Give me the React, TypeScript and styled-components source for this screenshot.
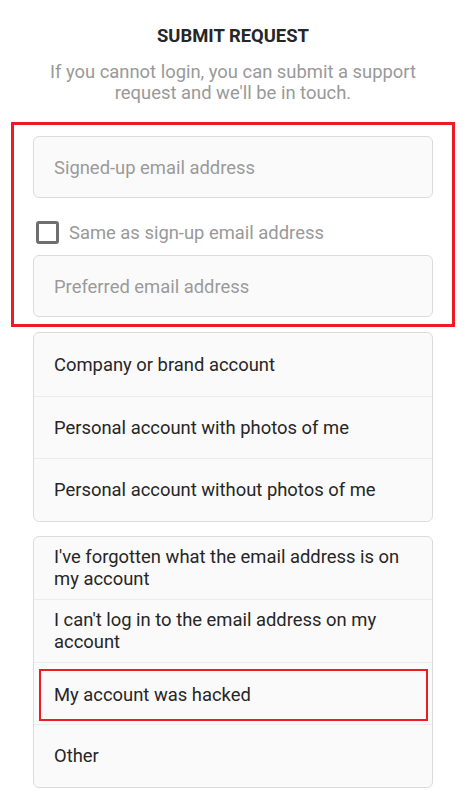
import styled, { createGlobalStyle } from "styled-components";

const GlobalStyle = createGlobalStyle`
    body {
        margin: 0;
        background: #ffffff;
        font-family: Roboto, "Liberation Sans", Arial, sans-serif;
    }
    * {
        box-sizing: border-box;
    }
`;

const accountTypes = [
    "Company or brand account",
    "Personal account with photos of me",
    "Personal account without photos of me",
];

const problems = [
    { label: "I've forgotten what the email address is on my account" },
    { label: "I can't log in to the email address on my account" },
    { label: "My account was hacked", marked: true },
    { label: "Other" },
];

const App = () => {
    return (
        <>
            <GlobalStyle />
            <Page>
                <Title>SUBMIT REQUEST</Title>
                <Intro>If you cannot login, you can submit a support request and we'll be in touch.</Intro>

                <Marked>
                    <Field placeholder="Signed-up email address" />
                    <CheckRow>
                        <CheckBox type="checkbox" />
                        Same as sign-up email address
                    </CheckRow>
                    <Field placeholder="Preferred email address" />
                </Marked>

                <Group>
                    {accountTypes.map((t) => (
                        <Option key={t}>{t}</Option>
                    ))}
                </Group>

                <Group>
                    {problems.map((p) => (
                        <Option key={p.label} $marked={p.marked}>
                            {p.marked ? <MarkedText>{p.label}</MarkedText> : p.label}
                        </Option>
                    ))}
                </Group>
            </Page>
        </>
    );
};

export default App;

const fontSize = "18.4px";

const Page = styled.div`
    display: flex;
    flex-direction: column;
    width: 444px;
    margin-left: 11px;
    padding: 26px 0 12px;
`;

const Title = styled.h1`
    margin: 0;
    text-align: center;
    font-size: ${fontSize};
    line-height: 20px;
    font-weight: 700;
    color: #262626;
`;

const Intro = styled.p`
    margin: 15px 20px 0;
    text-align: center;
    font-size: ${fontSize};
    line-height: 21px;
    color: #999999;
`;

const Marked = styled.div`
    display: flex;
    flex-direction: column;
    margin-top: 19px;
    padding: 11px 19px 7px;
    border: 3px solid #ed1c24;
`;

const Field = styled.input`
    width: 100%;
    height: 62px;
    padding: 0 20px;
    border: 1px solid #dbdbdb;
    border-radius: 6px;
    background: #fafafa;
    font-family: inherit;
    font-size: ${fontSize};
    color: #262626;
    outline: none;

    &::placeholder {
        color: #9a9a9a;
    }
`;

const CheckRow = styled.label`
    display: flex;
    align-items: center;
    gap: 10px;
    margin: 23px 0 11px 3px;
    font-size: ${fontSize};
    line-height: 23px;
    color: #999999;
`;

const CheckBox = styled.input`
    appearance: none;
    flex: none;
    width: 23px;
    height: 23px;
    margin: 0;
    border: 3px solid #6f6f6f;
    border-radius: 3px;
    background: #ffffff;
`;

const Group = styled.div`
    display: flex;
    flex-direction: column;
    margin: 5px 22px 0;
    border: 1px solid #dbdbdb;
    border-radius: 6px;
    background: #fafafa;
    overflow: hidden;

    & + & {
        margin-top: 14px;
    }
`;

const Option = styled.div<{ $marked?: boolean }>`
    display: flex;
    align-items: center;
    min-height: 62.5px;
    padding: ${(p) => (p.$marked ? "6px 4px 3px 5px" : "0 20px")};
    font-size: ${fontSize};
    line-height: 21.5px;
    color: #262626;

    & + & {
        border-top: 1px solid #ececec;
    }
`;

const MarkedText = styled.div`
    display: flex;
    align-items: center;
    width: 100%;
    height: 52px;
    padding: 0 13px;
    border: 2px solid #ed1c24;
`;
